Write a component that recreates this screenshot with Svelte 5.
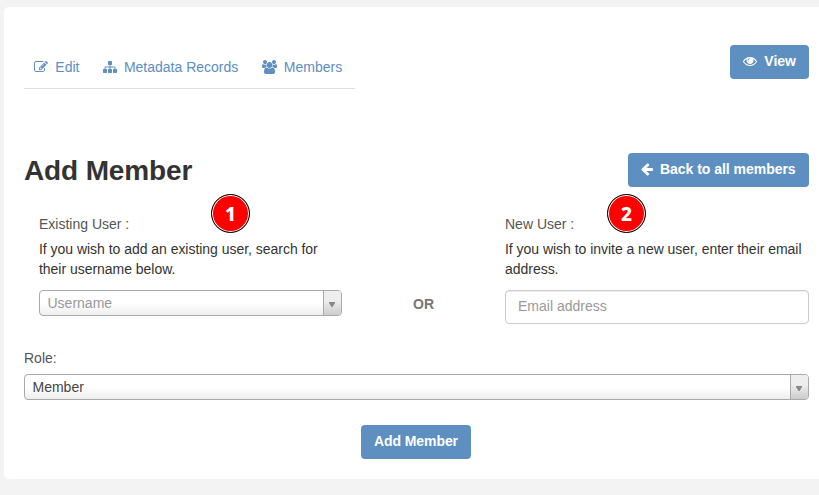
<script>
  const icons = {
    edit: { w: 1792, d: 'M888 1184l116-116-152-152-116 116v56h96v96h56zm440-720q-16-16-33 1l-350 350q-17 17-1 33t33-1l350-350q17-17 1-33zm80 594v190q0 119-84.5 203.5t-203.5 84.5h-832q-119 0-203.5-84.5t-84.5-203.5v-832q0-119 84.5-203.5t203.5-84.5h832q63 0 117 25 15 7 18 23 3 17-9 29l-49 49q-14 14-32 8-23-6-45-6h-832q-66 0-113 47t-47 113v832q0 66 47 113t113 47h832q66 0 113-47t47-113v-126q0-13 9-22l64-64q15-15 35-7t20 29zm-96-738l288 288-672 672h-288v-288zm444 132l-92 92-288-288 92-92q28-28 68-28t68 28l152 152q28 28 28 68t-28 68z' },
    sitemap: { w: 1792, d: 'M1792 1248v320q0 40-28 68t-68 28h-320q-40 0-68-28t-28-68v-320q0-40 28-68t68-28h96v-192h-512v192h96q40 0 68 28t28 68v320q0 40-28 68t-68 28h-320q-40 0-68-28t-28-68v-320q0-40 28-68t68-28h96v-192h-512v192h96q40 0 68 28t28 68v320q0 40-28 68t-68 28h-320q-40 0-68-28t-28-68v-320q0-40 28-68t68-28h96v-192q0-52 38-90t90-38h512v-192h-96q-40 0-68-28t-28-68v-320q0-40 28-68t68-28h320q40 0 68 28t28 68v320q0 40-28 68t-68 28h-96v192h512q52 0 90 38t38 90v192h96q40 0 68 28t28 68z' },
    users: { w: 1920, d: 'M593 896q-162 5-265 128h-134q-82 0-138-40.5t-56-118.5q0-353 124-353 6 0 43.5 21t97.5 42.5 119 21.5q67 0 133-23-5 37-5 66 0 139 81 256zm1071 637q0 120-73 189.5t-194 69.5h-874q-121 0-194-69.5t-73-189.5q0-53 3.5-103.5t14-109 26.5-108.5 43-97.5 62-81 85.5-53.5 111.5-20q10 0 43 21.5t73 48 107 48 135 21.5 135-21.5 107-48 73-48 43-21.5q61 0 111.5 20t85.5 53.5 62 81 43 97.5 26.5 108.5 14 109 3.5 103.5zm-1024-1277q0 106-75 181t-181 75-181-75-75-181 75-181 181-75 181 75 75 181zm704 384q0 159-112.5 271.5t-271.5 112.5-271.5-112.5-112.5-271.5 112.5-271.5 271.5-112.5 271.5 112.5 112.5 271.5zm576 225q0 78-56 118.5t-138 40.5h-134q-103-123-265-128 81-117 81-256 0-29-5-66 66 23 133 23 59 0 119-21.5t97.5-42.5 43.5-21q124 0 124 353zm-128-609q0 106-75 181t-181 75-181-75-75-181 75-181 181-75 181 75 75 181z' },
    eye: { w: 1792, d: 'M1664 960q-152-236-381-353 61 104 61 225 0 185-131.5 316.5t-316.5 131.5-316.5-131.5-131.5-316.5q0-121 61-225-229 117-381 353 133 205 333.5 326.5t434.5 121.5 434.5-121.5 333.5-326.5zm-720-384q0-20-14-34t-34-14q-125 0-214.5 89.5t-89.5 214.5q0 20 14 34t34 14 34-14 14-34q0-86 61-147t147-61q20 0 34-14t14-34zm848 384q0 34-20 69-140 230-376.5 368.5t-499.5 138.5-499.5-139-376.5-368q-20-35-20-69t20-69q140-229 376.5-368t499.5-139 499.5 139 376.5 368q20 35 20 69z' },
    back: { w: 1536, d: 'M1536 896v128q0 53-32.5 90.5t-84.5 37.5h-704l293 294q38 36 38 90t-38 90l-75 76q-37 37-90 37-52 0-91-37l-651-652q-37-37-37-90 0-52 37-91l651-650q38-38 91-38 52 0 90 38l75 74q38 38 38 91t-38 91l-293 293h704q52 0 84.5 37.5t32.5 90.5z' }
  };
  const tabs = [
    { icon: 'edit', label: 'Edit' },
    { icon: 'sitemap', label: 'Metadata Records' },
    { icon: 'users', label: 'Members' }
  ];
</script>

{#snippet glyph(name)}
  <svg class="glyph" width={icons[name].w / 128} height="14" viewBox="0 0 {icons[name].w} 1792" aria-hidden="true">
    <path d={icons[name].d} fill="currentColor" />
  </svg>
{/snippet}

{#snippet select(text, muted)}
  <div class="select" class:muted>
    <span class="value">{text}</span>
    <span class="arrow"><svg width="6" height="5" viewBox="0 0 6 5"><path d="M0 0h6v1L3.5 5h-1L0 1z" fill="#888" /></svg></span>
  </div>
{/snippet}

<main class="card">
  <header class="top">
    <nav class="tabs">
      {#each tabs as tab}
        <a class="tab" href="#{tab.icon}">{@render glyph(tab.icon)}<span>{tab.label}</span></a>
      {/each}
    </nav>
    <button class="btn">{@render glyph('eye')}<span>View</span></button>
  </header>

  <div class="heading">
    <h1>Add Member</h1>
    <button class="btn back">{@render glyph('back')}<span>Back to all members</span></button>
  </div>

  <div class="choices">
    <section class="choice">
      <div class="label">Existing User :</div>
      <p>If you wish to add an existing user, search for their username below.</p>
      {@render select('Username', true)}
      <span class="badge first">1</span>
    </section>
    <div class="or">OR</div>
    <section class="choice">
      <div class="label">New User :</div>
      <p>If you wish to invite a new user, enter their email address.</p>
      <input type="text" placeholder="Email address" />
      <span class="badge second">2</span>
    </section>
  </div>

  <div class="label role">Role:</div>
  {@render select('Member', false)}

  <div class="actions"><button class="btn add">Add Member</button></div>
</main>

<style>
  :global(body) {
    background: #f3f3f3;
    overflow: hidden;
  }
  .card, .card * { box-sizing: border-box; }
  .card {
    margin: 7px 0 0 4px;
    height: 472px;
    padding: 38px 10px 0 20px;
    background: #fff;
    border-radius: 5px 0 0 5px;
    font: 14px/20px "Liberation Sans", Arial, sans-serif;
    color: #333;
  }
  .top {
    display: flex;
    justify-content: space-between;
    align-items: flex-start;
    height: 108px;
  }
  .tabs {
    display: flex;
    gap: 23.5px;
    width: 331px;
    height: 44px;
    padding: 12px 0 0 10.3px;
    border-bottom: 1px solid #ddd;
  }
  .tab {
    display: flex;
    gap: 7px;
    height: 20px;
    color: #5e8ec2;
    text-decoration: none;
    white-space: nowrap;
  }
  .glyph {
    flex: none;
    margin-top: 3px;
  }
  .btn {
    display: flex;
    gap: 7px;
    height: 34px;
    padding: 6px 13px;
    border: 0;
    border-radius: 4px;
    background: #5e8fc1;
    color: #fff;
    font: bold 14px/20px "Liberation Sans", Arial, sans-serif;
    white-space: nowrap;
  }
  .back {
    width: 181px;
    letter-spacing: -.03px;
  }
  .add {
    width: 110px;
    letter-spacing: -.08px;
  }
  .heading {
    display: flex;
    justify-content: space-between;
    height: 61px;
  }
  h1 {
    margin: 2px 0 0;
    font-size: 28px;
    line-height: 32px;
    letter-spacing: -.14px;
  }
  .choices {
    display: flex;
    justify-content: space-between;
    padding-left: 15px;
    height: 134px;
  }
  .choice {
    position: relative;
    width: 304px;
  }
  .choice:first-child { width: 303px; }
  .label { color: #555; }
  p {
    margin: 5px 0 11px;
    letter-spacing: -.03px;
  }
  .or {
    margin: 80px 0 0;
    color: #777;
    font-weight: bold;
  }
  input {
    display: block;
    width: 304px;
    height: 34px;
    padding: 0 12px 2px;
    border: 1px solid #ccc;
    border-radius: 4px;
    box-shadow: inset 0 1px 1px rgba(0, 0, 0, .075);
    font: inherit;
  }
  input::placeholder { color: #999; opacity: 1; }
  .select {
    display: flex;
    justify-content: space-between;
    height: 26px;
    border: 1px solid #aaa;
    border-radius: 4px;
    overflow: hidden;
    background: linear-gradient(to top, #eee 0%, #fff 50%);
    color: #444;
  }
  .value {
    padding-left: 7.5px;
    line-height: 24px;
  }
  .muted .value { color: #999; }
  .arrow {
    width: 18px;
    padding: 11px 0 0 5px;
    line-height: 0;
    border-left: 1px solid #aaa;
    background: linear-gradient(to top, #ccc 0%, #eee 60%);
  }
  .role { margin-bottom: 6px; }
  .badge {
    position: absolute;
    top: -20px;
    width: 39px;
    height: 39px;
    border: 1px solid #000;
    border-radius: 50%;
    background: red;
    box-shadow: inset 0 0 0 1px #fff;
    color: #fff;
    font: 800 19px/38px "Noto Sans", sans-serif;
    text-align: center;
  }
  .first { left: 172px; }
  .second { left: 102px; }
  .actions {
    display: flex;
    justify-content: center;
    padding: 25px 1px 0 0;
  }
</style>
